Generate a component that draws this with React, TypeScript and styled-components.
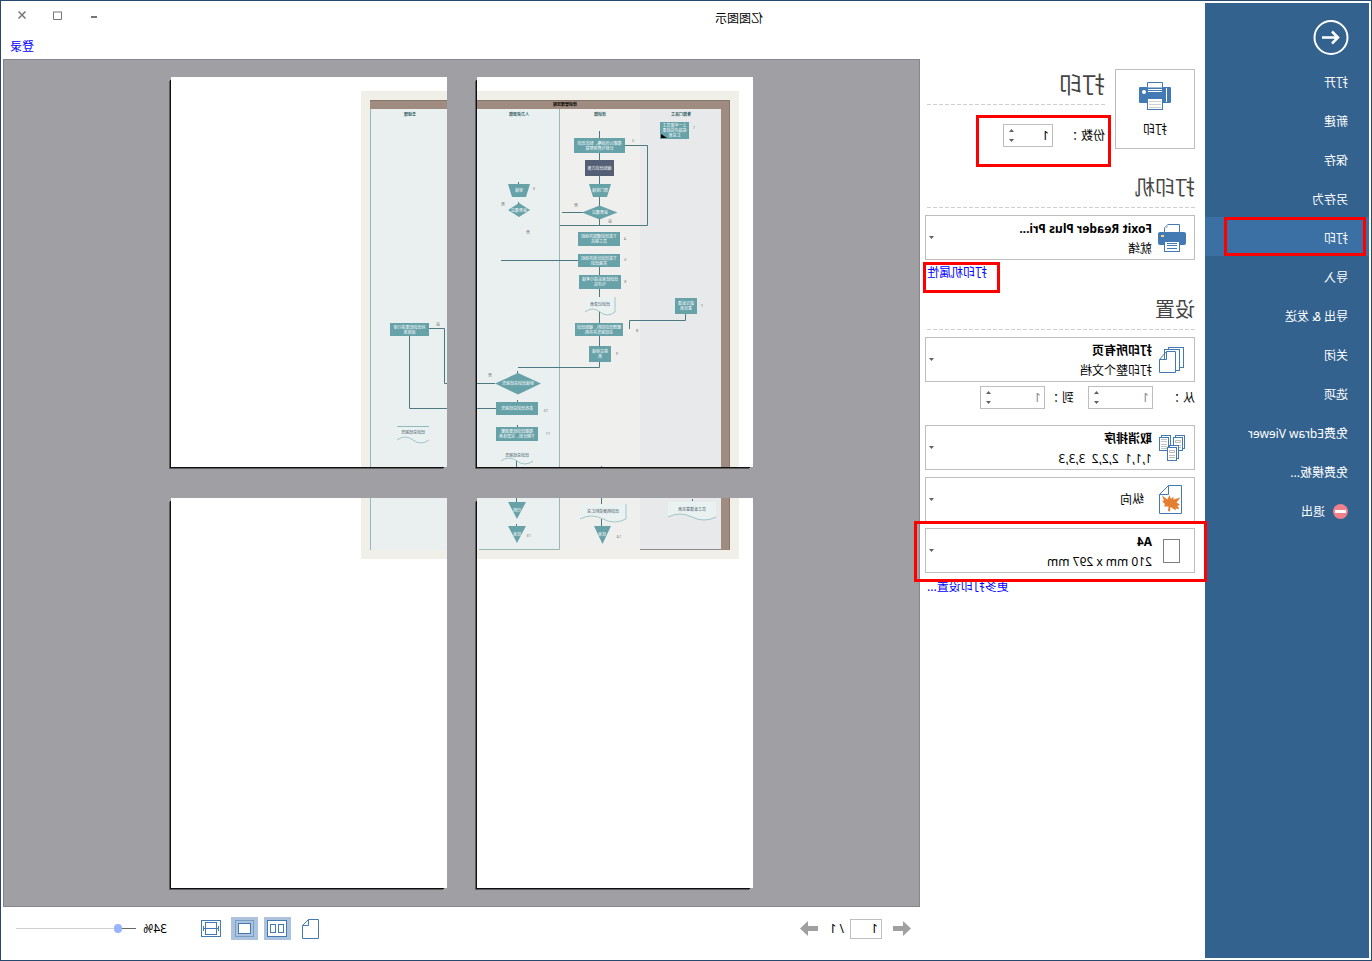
import React, { createContext, useContext, useState } from "react";
import styled, { createGlobalStyle, css } from "styled-components";

const colors = {
  frame: "#27496f",
  side: "#33628e",
  sideActive: "#3b70a5",
  icon: "#437ab3",
  line: "#bebebe",
  mark: "#ff0000",
  canvas: "#a09fa4",
  teal: "#68a2a9",
  wire: "#4b7b81",
};

const GlobalStyle = createGlobalStyle`
  * { box-sizing: border-box; }
  body {
    margin: 0;
    background: #fff;
    color: #000;
    font: 12px/18px "Noto Sans", "Noto Sans CJK SC", sans-serif;
  }
  button, input, select { font: inherit; color: inherit; }
`;

const Window = styled.div`
  display: flex;
  min-height: 100vh;
  padding: 2px;
  border: 1px solid ${colors.frame};
  background: #fff;
  transform: scaleX(-1);
`;

const Sidebar = styled.aside`
  flex: 0 0 164px;
  padding-top: 16px;
  background: ${colors.side};
  color: #fff;
`;

const BackButton = styled.button`
  display: block;
  width: 36px;
  height: 36px;
  margin: 0 0 6px 20px;
  padding: 0;
  border: 0;
  background: none;
`;

const NavList = styled.ul`
  margin: 0;
  padding: 0;
  list-style: none;
`;

const NavItem = styled.li`
  position: relative;
`;

const NavButton = styled.button<{ $active?: boolean }>`
  display: flex;
  align-items: center;
  gap: 8px;
  width: 100%;
  height: 39px;
  padding: 4px 0 0 21px;
  border: 0;
  background: ${(p) => (p.$active ? colors.sideActive : "transparent")};
  text-align: left;
  white-space: nowrap;
`;

const Mark = styled.span<{ $top: number; $right: number; $bottom: number; $left: number }>`
  position: absolute;
  z-index: 2;
  inset: ${(p) => `${p.$top}px ${p.$right}px ${p.$bottom}px ${p.$left}px`};
  border: 3px solid ${colors.mark};
  pointer-events: none;
`;

const Main = styled.div`
  display: flex;
  flex: 1;
  flex-direction: column;
  min-width: 0;
`;

const Header = styled.header`
  display: grid;
  grid-template-columns: 1fr 270px;
  grid-template-rows: 28px 28px;
`;

const Title = styled.h1`
  margin: 0;
  padding-top: 7px;
  font-size: 12px;
  font-weight: 400;
  text-align: center;
`;

const WindowButtons = styled.div`
  display: flex;
  justify-content: flex-end;
  padding-right: 1px;
`;

const WindowButton = styled.button`
  display: grid;
  place-items: center;
  width: 36px;
  height: 24px;
  padding: 0;
  border: 0;
  background: none;
`;

const Link = styled.a`
  color: #0000ff;
  text-decoration: none;
`;

const Login = styled(Link)`
  grid-column: 2;
  justify-self: end;
  padding: 7px 7px 0 0;
`;

const Body = styled.div`
  display: flex;
  flex: 1;
`;

const Panel = styled.form`
  flex: 0 0 285px;
  padding: 10px 5px 10px 10px;
`;

const PrintRow = styled.div`
  display: flex;
  gap: 10px;
  height: 80px;
`;

const PrintButton = styled.button`
  display: flex;
  flex: 0 0 80px;
  flex-direction: column;
  align-items: center;
  gap: 11px;
  padding: 12px 0 0;
  border: 1px solid ${colors.line};
  background: #fff;
`;

const PrintSide = styled.div`
  flex: 1;
`;

const Heading = styled.h2<{ $large?: boolean; $gap?: number }>`
  margin: ${(p) => p.$gap ?? 0}px 2px 0 0;
  padding-bottom: ${(p) => (p.$large ? 5 : 0)}px;
  background: repeating-linear-gradient(to right, #d0d0d0 0 4px, transparent 4px 6px) bottom / 100% 1px no-repeat;
  color: #444;
  font-size: ${(p) => (p.$large ? 23 : 20)}px;
  font-weight: 400;
  line-height: ${(p) => (p.$large ? 31 : 41)}px;
`;

const Field = styled.div<{ $gap: number }>`
  position: relative;
  display: flex;
  align-items: center;
  height: 23px;
  margin-top: ${(p) => p.$gap}px;
`;

const FieldLabel = styled.label<{ $width: number; $indent?: number }>`
  width: ${(p) => p.$width}px;
  padding-left: ${(p) => p.$indent ?? 0}px;
  white-space: pre;
`;

const Spin = styled.div<{ $width: number; $dim?: boolean }>`
  display: flex;
  width: ${(p) => p.$width}px;
  height: 23px;
  border: 1px solid ${colors.line};
  color: ${(p) => (p.$dim ? "#8a8a8a" : "#000")};
`;

const bareInput = css`
  min-width: 0;
  border: 0;
  outline: 0;
  background: none;
  appearance: textfield;
  &::-webkit-inner-spin-button { appearance: none; }
`;

const SpinInput = styled.input`
  ${bareInput}
  flex: 1;
  padding: 0 0 0 3px;
`;

const SpinButtons = styled.div`
  display: flex;
  flex: 0 0 16px;
  flex-direction: column;
`;

const SpinButton = styled.button`
  display: grid;
  flex: 1;
  place-items: center;
  padding: 0;
  border: 0;
  background: none;
`;

const Choice = styled.div<{ $gap: number }>`
  position: relative;
  display: flex;
  align-items: center;
  height: 45px;
  margin-top: ${(p) => p.$gap}px;
  padding: 0 3px 0 2px;
  border: 1px solid ${colors.line};
`;

const ChoiceIcon = styled.span`
  display: grid;
  flex: 0 0 40px;
  place-items: center;
`;

const ChoiceText = styled.label<{ $indent?: boolean }>`
  display: flex;
  flex: 1;
  flex-direction: column;
  gap: 2px;
  padding: ${(p) => (p.$indent ? "0 0 0 8px" : "2px 0 0")};
  white-space: pre;
`;

const ChoiceSelect = styled.select`
  position: absolute;
  inset: 0;
  width: 100%;
  height: 100%;
  opacity: 0;
`;

const LinkRow = styled.div<{ $gap: number }>`
  position: relative;
  margin-top: ${(p) => p.$gap}px;
  padding-right: 2px;
  text-align: right;
`;

const Work = styled.div`
  display: flex;
  flex: 1;
  flex-direction: column;
`;

const Canvas = styled.main`
  display: grid;
  flex: 1;
  grid-template-columns: 276px 276px;
  gap: 31px 30px;
  place-content: center;
  padding: 16px 18px 18px 16px;
  border: 1px solid #87868c;
  background: ${colors.canvas};
`;

const Page = styled.svg`
  display: block;
  width: 276px;
  height: 390px;
  background: #fff;
  box-shadow: 2px 2px 0 -1px #111, 3px 3px 0 -1px #5c5c5f;
`;

const Footer = styled.footer`
  display: flex;
  justify-content: space-between;
  padding: 10px 13px 18px 9px;
`;

const Pager = styled.div`
  display: flex;
  align-items: center;
  height: 23px;
`;

const PagerButton = styled.button`
  display: grid;
  width: 18px;
  padding: 0;
  border: 0;
  background: none;
`;

const PagerInput = styled.input`
  ${bareInput}
  width: 32px;
  height: 20px;
  margin: 0 6px 0 11px;
  padding: 0 0 0 3px;
  border: 1px solid ${colors.line};
`;

const PagerTotal = styled.span`
  width: 26px;
  word-spacing: normal;
`;

const ViewTools = styled.div`
  display: flex;
  align-items: center;
  gap: 6px;
  height: 23px;
`;

const ViewButton = styled.button<{ $on?: boolean }>`
  display: grid;
  place-items: center;
  width: 27px;
  height: 23px;
  padding: 0;
  border: 0;
  background: ${(p) => (p.$on ? "#adc2dc" : "transparent")};
`;

const ZoomLabel = styled.label`
  width: 25px;
  margin-left: 25px;
  white-space: nowrap;
`;

const ZoomRange = styled.input`
  width: 120px;
  height: 9px;
  margin: 0;
  appearance: none;
  background: linear-gradient(to right, #666 0 18px, #d0d0d0 18px) center / 100% 1px no-repeat;
  &::-webkit-slider-thumb {
    width: 8px;
    height: 9px;
    border-radius: 4px;
    background: #98b4ff;
    appearance: none;
  }
`;

/* ---------- icons ---------- */

const BackIcon = () => (
  <svg width="36" height="36" fill="none" stroke="#fff">
    <circle cx="18" cy="18.5" r="16.5" strokeWidth="2" />
    <path d="M27 18.500H11M17 12.500 11 18.500 17 24.500" strokeWidth="2.500" />
  </svg>
);

const ExitIcon = () => (
  <svg width="15" height="15">
    <circle cx="7.500" cy="7.500" r="7.500" fill="#f0808c" />
    <rect x="2" y="6" width="11" height="3" fill="#fff" />
  </svg>
);

const PrintIcon = () => (
  <svg width="32" height="28">
    <rect x="0" y="5" width="32" height="16" rx="1" fill={colors.icon} />
    <path d="M8.500 5.500V.5h15v5" fill="#fff" stroke={colors.icon} />
    <path d="M9 7.500h14M9 9.500h14M4.500 6v14" stroke="#fff" />
    <circle cx="27" cy="10" r="2" fill="#fff" />
    <rect x="8.500" y="16.500" width="15" height="11" fill="#fff" stroke={colors.icon} />
    <path d="M10 19.500h12M10 22.500h12M10 25.500h12" stroke="#d0d0d0" />
  </svg>
);

const PrinterIcon = () => (
  <svg width="28" height="28">
    <rect x="0" y="8" width="28" height="13" rx="2" fill={colors.icon} />
    <path d="M6.500 8.500V.5h12l3 3v5z" fill="#fff" stroke={colors.icon} />
    <path d="M18.500 .5v3h3" fill="#ddd" stroke="#ccc" />
    <rect x="22" y="11" width="3" height="2" fill="#f2cf8a" />
    <rect x="6.500" y="17.500" width="15" height="10" fill="#fff" stroke={colors.icon} />
    <path d="M9 19.500h10M9 21.500h10M9 24.500h10" stroke={colors.icon} />
  </svg>
);

const PagesIcon = () => (
  <svg width="25" height="26" fill="#fff" stroke={colors.icon}>
    <rect x=".5" y=".5" width="15" height="20" />
    <rect x="4.500" y="2.500" width="15" height="21" />
    <path d="M8.500 4.500h9l7 8v13h-16zM17.500 4.500v8h7" />
  </svg>
);

const SmallStack = ({ x, y, photo }: { x: number; y: number; photo?: boolean }) => (
  <g transform={`translate(${x} ${y})`}>
    <rect x=".5" y=".5" width="9" height="13" />
    <rect x="2.500" y="2.500" width="9" height="13" />
    {photo ? (
      <path d="M4.500 5.500h5v2h-5zM4 10.500h6M4 12.500h6" stroke="#bdbdbd" />
    ) : (
      <path d="M4 4.500h6M4 6.500h6M4 9.500h6M4 11.500h6M4 13.500h6" stroke="#c6c6c6" />
    )}
  </g>
);

const CollateIcon = () => (
  <svg width="26" height="26" fill="#fff" stroke={colors.icon}>
    <SmallStack x={0} y={0} photo />
    <SmallStack x={14} y={0} />
    <SmallStack x={6} y={10} photo />
  </svg>
);

const PortraitIcon = () => (
  <svg width="26" height="29">
    <path d="M3.500 .5h13l9 9v19h-22z" fill="#fff" stroke={colors.icon} />
    <path d="M16.500 .5v9h9" fill="none" stroke={colors.icon} />
    <path
      d="M15.500 10 17.500 14.500 23 10.500 21 15.500 23 16 20 19 21 21.500 16.500 21.500 17 26 15 26.500 14.500 22 9 25.500 9.500 23.500 5.500 24 7.500 21 5 19.500 8.500 17.500 4.500 12.500 11.500 14.500 11.500 11.500 14 14z"
      fill="#e27f30"
    />
  </svg>
);

const PaperIcon = () => (
  <svg width="17" height="24">
    <rect x=".5" y=".5" width="16" height="23" fill="#fff" stroke="#808080" />
  </svg>
);

const Caret = ({ up }: { up?: boolean }) => (
  <svg width="5" height="3">
    <path d={up ? "M0 3 2.500 0 5 3z" : "M0 0 2.500 3 5 0z"} fill="#606060" />
  </svg>
);

const PagerArrow = ({ next }: { next?: boolean }) => (
  <svg width="18" height="15">
    <path d={next ? "M0 5h10V0l8 7.500-8 7.500v-5H0z" : "M18 5H8V0L0 7.500 8 15v-5h10z"} fill="#a0a0a0" />
  </svg>
);

const FileIcon = () => (
  <svg width="17" height="20" fill="none" stroke={colors.icon}>
    <path d="M.5 .5h10l6 6v13H.5zM10.500 .5v6h6" />
  </svg>
);

const SpreadIcon = () => (
  <svg width="20" height="17" fill="#fff" stroke={colors.icon}>
    <rect x=".5" y=".5" width="19" height="16" />
    <rect x="3.500" y="4.500" width="5" height="8" />
    <rect x="11.500" y="4.500" width="5" height="8" />
  </svg>
);

const SingleIcon = () => (
  <svg width="19" height="17" fill="none" stroke={colors.icon}>
    <rect x=".5" y=".5" width="18" height="16" strokeDasharray="1 1" />
    <rect x="3.500" y="3.500" width="12" height="10" fill="#fff" />
  </svg>
);

const WidthIcon = () => (
  <svg width="20" height="17" fill="none" stroke={colors.icon}>
    <rect x=".5" y=".5" width="19" height="16" />
    <rect x="4.500" y="2.500" width="11" height="12" />
    <path d="M2 8.500h16M2.500 6v5M17.500 6v5" />
  </svg>
);

/* ---------- flowchart ---------- */

const PAGE_W = 276;
const PAGE_H = 390;

/* Origin of the sheet on which the chart is being drawn. */
const SheetContext = createContext({ left: 0, top: 0 });

const FlowLabel = styled.text`
  font-size: 4px;
  text-anchor: middle;
`;

/* A label is drawn only on the sheet that it falls on. */
const FlowText = ({ x, y, children, ...rest }: { x: number; y: number; children: string; fill?: string; fontWeight?: number }) => {
  const { left, top } = useContext(SheetContext);
  const inside = x >= left && x < left + PAGE_W && y >= top && y < top + PAGE_H;
  return inside ? <FlowLabel x={x} y={y} {...rest}>{children}</FlowLabel> : null;
};

type BoxData = [x: number, y: number, w: number, h: number, lines: string[], fill?: string];

const boxes: BoxData[] = [
  [64, 45, 29, 17, ["上一年度员工", "绩效评估结果", "汇总表"]],
  [128, 61, 51, 15, ["根据公司战略，制定培训", "计划与费用预算"]],
  [139, 83, 29, 16, ["编制培训方案"], "#545f75"],
  [133, 155, 42, 14, ["下发培训通知并组织", "员工报名"]],
  [133, 177, 42, 13, ["下发培训计划并组织", "实施培训"]],
  [132, 198, 42, 14, ["培训结束后进行考核", "与评估"]],
  [130, 246, 48, 13, ["整理培训资料，编制培训", "总结报告并存档"]],
  [142, 269, 22, 16, ["提交审核", "表"]],
  [56, 221, 22, 16, ["填写反馈", "意见表"]],
  [215, 325, 42, 13, ["发布培训总结报告"]],
  [215, 350, 42, 14, ["根据培训结果调整", "下期计划，完善体系"]],
  [294, 246, 39, 13, ["对培训结果进行审", "阅批准"]],
];

const docs: [x: number, y: number, w: number, h: number, label: string][] = [
  [138, 220, 30, 15, "培训记录表"],
  [220, 374, 32, 10, "培训总结报告"],
  [294, 349, 32, 14, "培训总结报告"],
  [127, 396, 46, 15, "培训档案资料汇总"],
  [37, 394, 48, 15, "员工反馈意见表"],
];

const notes: [x: number, y: number, label: string][] = [
  [59, 52, "1"], [120, 65, "2"], [219, 113, "3"], [250, 129, "否"], [225, 157, "否"],
  [177, 130, "否"], [143, 146, "是"], [128, 163, "4"], [128, 184, "5"], [128, 206, "6"],
  [51, 230, "7"], [116, 255, "8"], [136, 278, "9"], [263, 300, "否"], [207, 335, "10"],
  [205, 358, "11"], [285, 249, "是"], [224, 429, "13"], [134, 430, "14"],
];

const Flowchart = () => (
  <g>
    <rect x="14" y="14" width="348" height="437" fill="#f0f0e8" />
    <rect x="23" y="23" width="330" height="9" fill="#9f8b7f" />
    <rect x="23" y="23" width="9" height="419" fill="#9f8b7f" />
    <path d="M353 23.500H23.500V442" fill="none" stroke="#87766c" />
    <rect x="32" y="32" width="81" height="410" fill="#e8e9eb" />
    <rect x="113" y="32" width="80" height="410" fill="#eff0ed" />
    <rect x="193" y="32" width="160" height="410" fill="#eaf0f0" />
    <path d="M193.500 32v409.500H274M352.500 32v410" fill="none" stroke="#97b8b9" />
    <path d="M32 441.500h81" stroke="#8c8b94" />

    <FlowText x={188} y={29} fontWeight={700}>培训管理流程</FlowText>
    <g fill="#2f6064" fontWeight="700">
      <FlowText x={72} y={39}>各部门员工</FlowText>
      <FlowText x={153} y={39}>培训部</FlowText>
      <FlowText x={234} y={39}>人力资源部</FlowText>
      <FlowText x={313} y={39}>总经理</FlowText>
    </g>

    <g fill="none" stroke={colors.wire}>
      <path d="M153.500 54v94M153.500 190v100.500H235M128 68.500H105.500V148.500H193M170 135.500h21" />
      <path d="M175 183.500h77M67.500 237v6.500H123.500V252M258 306.500h20.500V251.500H294M257 331.500h56.500V259" />
      <path d="M236.500 383v11M151.500 389v7M151.500 411v8M234.500 105v3M234.500 125v3M235.500 294v3M235.500 323v3M235.500 348v3M236.500 416v3M60.500 391v2" />
    </g>

    {docs.map(([x, y, w, h, label]) => (
      <g key={`${x}-${y}`}>
        <path d={`M${x} ${y}h${w}v${h}q${-w / 4} -6 ${-w / 2} 0t${-w / 2} 0z`} fill="#e9f1f1" />
        <path
          d={`M${x + w} ${y + h}q${-w / 4} -6 ${-w / 2} 0t${-w / 2} 0${h > 12 && x > 100 && x < 200 ? `V${y}` : ""}`}
          fill="none"
          stroke="#8fbabc"
          strokeWidth=".8"
        />
        <FlowText x={x + w / 2} y={y + h / 2 + 1} fill="#456">{label}</FlowText>
      </g>
    ))}
    <path d="M294 349.500h32" stroke="#8fbabc" />

    <g fill={colors.teal}>
      <path d="M142 107h22l-4 13h-14zM223 107h22l-4 13h-14z" />
      <path d="M135.500 135.500 153.500 128.500 171 135.500 153.500 142.500zM223 133 234 126 245 133 234 140z" />
      <path d="M212 306.500 235 296 258 306.500 235 317.500z" />
      <path d="M227 394h18l-9 17zM227 418h18l-9 17zM142 418h17l-8.500 18z" />
    </g>
    {boxes.map(([x, y, w, h, lines, fill]) => (
      <g key={`${x}-${y}`}>
        <rect x={x} y={y} width={w} height={h} fill={fill ?? colors.teal} />
        {lines.map((line, i) => (
          <FlowText key={line} x={x + w / 2} y={y + h / 2 + 1.5 + (i - (lines.length - 1) / 2) * 5} fill="#fff">
            {line}
          </FlowText>
        ))}
      </g>
    ))}
    <path d="M92 57v4h-6z" />
    <g fill="#fff">
      <FlowText x={153} y={115}>部门审核</FlowText>
      <FlowText x={234} y={115}>审核</FlowText>
      <FlowText x={153} y={137}>是否通过</FlowText>
      <FlowText x={234} y={135}>是否通过</FlowText>
      <FlowText x={235} y={308}>审核培训总结报告</FlowText>
      <FlowText x={236} y={404}>归档</FlowText>
      <FlowText x={236} y={428}>结束</FlowText>
      <FlowText x={151} y={428}>结束</FlowText>
    </g>
    <g fill="#777">
      {notes.map(([x, y, label]) => (
        <FlowText key={`${x}-${y}`} x={x} y={y}>{label}</FlowText>
      ))}
    </g>
  </g>
);

const sheets = [
  { left: 0, top: 0 },
  { left: PAGE_W, top: 0 },
  { left: 0, top: PAGE_H },
  { left: PAGE_W, top: PAGE_H },
];

/* ---------- controls ---------- */

const NumberField = ({ id, width, dim, max = 99 }: { id: string; width: number; dim?: boolean; max?: number }) => {
  const [value, setValue] = useState(1);
  const set = (n: number) => setValue(Math.min(max, Math.max(1, n || 1)));
  return (
    <Spin $width={width} $dim={dim}>
      <SpinInput id={id} type="number" min={1} value={value} onChange={(e) => set(Number(e.target.value))} />
      <SpinButtons>
        <SpinButton type="button" aria-label="增加" onClick={() => set(value + 1)}><Caret up /></SpinButton>
        <SpinButton type="button" aria-label="减少" onClick={() => set(value - 1)}><Caret /></SpinButton>
      </SpinButtons>
    </Spin>
  );
};

interface ChoiceFieldProps {
  id: string;
  icon: React.ReactNode;
  title?: string;
  detail: string;
  gap: number;
  marked?: boolean;
}

const ChoiceField = ({ id, icon, title, detail, gap, marked }: ChoiceFieldProps) => (
  <Choice $gap={gap}>
    <ChoiceIcon>{icon}</ChoiceIcon>
    <ChoiceText htmlFor={id} $indent={!title}>
      {title && <b>{title}</b>}
      <span>{detail}</span>
    </ChoiceText>
    <Caret />
    <ChoiceSelect id={id}>
      <option>{title ?? detail}</option>
    </ChoiceSelect>
    {marked && <Mark $top={-8} $right={-12} $bottom={-10} $left={-13} />}
  </Choice>
);

const navItems = [
  "打开", "新建", "保存", "另存为", "打印", "导入", "导出 & 发送",
  "关闭", "选项", "免费Edraw Viewer", "免费模板...", "退出",
];

export default function App() {
  const [zoom, setZoom] = useState(12.5);
  return (
    <>
      <GlobalStyle />
      <Window>
        <Sidebar>
          <BackButton aria-label="返回"><BackIcon /></BackButton>
          <nav>
            <NavList>
              {navItems.map((item) => (
                <NavItem key={item}>
                  <NavButton $active={item === "打印"}>
                    {item === "退出" && <ExitIcon />}
                    {item}
                  </NavButton>
                  {item === "打印" && <Mark $top={0} $right={19} $bottom={0} $left={3} />}
                </NavItem>
              ))}
            </NavList>
          </nav>
        </Sidebar>

        <Main>
          <Header>
            <Title>亿图图示</Title>
            <WindowButtons>
              <WindowButton aria-label="最小化">
                <svg width="10" height="10"><path d="M2 7h6" stroke="#777" strokeWidth="2" /></svg>
              </WindowButton>
              <WindowButton aria-label="最大化">
                <svg width="9" height="9"><path d="M.5 1v7.500h8V1M0 1h9" fill="none" stroke="#777" /></svg>
              </WindowButton>
              <WindowButton aria-label="关闭窗口">
                <svg width="8" height="8"><path d="M.5 .5l7 7M7.500 .5l-7 7" stroke="#777" strokeWidth="1.500" /></svg>
              </WindowButton>
            </WindowButtons>
            <Login href="#login">登录</Login>
          </Header>

          <Body>
            <Panel onSubmit={(e) => e.preventDefault()}>
              <PrintRow>
                <PrintButton type="submit"><PrintIcon />打印</PrintButton>
                <PrintSide>
                  <Heading $large>打印</Heading>
                  <Field $gap={19}>
                    <FieldLabel htmlFor="copies" $width={52}>份数 ：</FieldLabel>
                    <NumberField id="copies" width={50} />
                    <Mark $top={-9} $right={51} $bottom={-20} $left={-6} />
                  </Field>
                </PrintSide>
              </PrintRow>

              <Heading $gap={18}>打印机</Heading>
              <ChoiceField id="printer" gap={7} icon={<PrinterIcon />} title="Foxit Reader Plus Pri..." detail="就绪" />
              <LinkRow $gap={4}>
                <Link href="#printer-properties">打印机属性</Link>
                <Mark $top={-2} $right={-2} $bottom={-11} $left={195} />
              </LinkRow>

              <Heading $gap={7}>设置</Heading>
              <ChoiceField id="range" gap={7} icon={<PagesIcon />} title="打印所有页" detail="打印整个文档" />
              <Field $gap={4}>
                <FieldLabel htmlFor="from" $width={42}>从 ：</FieldLabel>
                <NumberField id="from" width={65} dim />
                <FieldLabel htmlFor="to" $width={43} $indent={14}>到 ：</FieldLabel>
                <NumberField id="to" width={65} dim />
              </Field>
              <ChoiceField id="collate" gap={16} icon={<CollateIcon />} title="取消排序" detail="1,1,1  2,2,2  3,3,3" />
              <ChoiceField id="orientation" gap={7} icon={<PortraitIcon />} detail="纵向" />
              <ChoiceField id="paper" gap={6} icon={<PaperIcon />} title="A4" detail="210 mm x 297 mm" marked />
              <LinkRow $gap={5}>
                <Link href="#more">更多打印设置...</Link>
              </LinkRow>
            </Panel>

            <Work>
              <Canvas>
                {sheets.map((sheet) => (
                  <SheetContext.Provider key={`${sheet.left}-${sheet.top}`} value={sheet}>
                    <Page viewBox={`${sheet.left} ${sheet.top} ${PAGE_W} ${PAGE_H}`}><Flowchart /></Page>
                  </SheetContext.Provider>
                ))}
              </Canvas>
              <Footer>
                <Pager>
                  <PagerButton aria-label="上一页"><PagerArrow /></PagerButton>
                  <PagerInput aria-label="页码" defaultValue="1" />
                  <PagerTotal>/ 1</PagerTotal>
                  <PagerButton aria-label="下一页"><PagerArrow next /></PagerButton>
                </Pager>
                <ViewTools>
                  <ViewButton aria-label="实际大小"><FileIcon /></ViewButton>
                  <ViewButton $on aria-label="多页"><SpreadIcon /></ViewButton>
                  <ViewButton $on aria-label="整页"><SingleIcon /></ViewButton>
                  <ViewButton aria-label="页宽"><WidthIcon /></ViewButton>
                  <ZoomLabel htmlFor="zoom">34%</ZoomLabel>
                  <ZoomRange
                    id="zoom"
                    type="range"
                    min={0}
                    max={100}
                    step={0.5}
                    value={zoom}
                    onChange={(e) => setZoom(Number(e.target.value))}
                  />
                </ViewTools>
              </Footer>
            </Work>
          </Body>
        </Main>
      </Window>
    </>
  );
}
